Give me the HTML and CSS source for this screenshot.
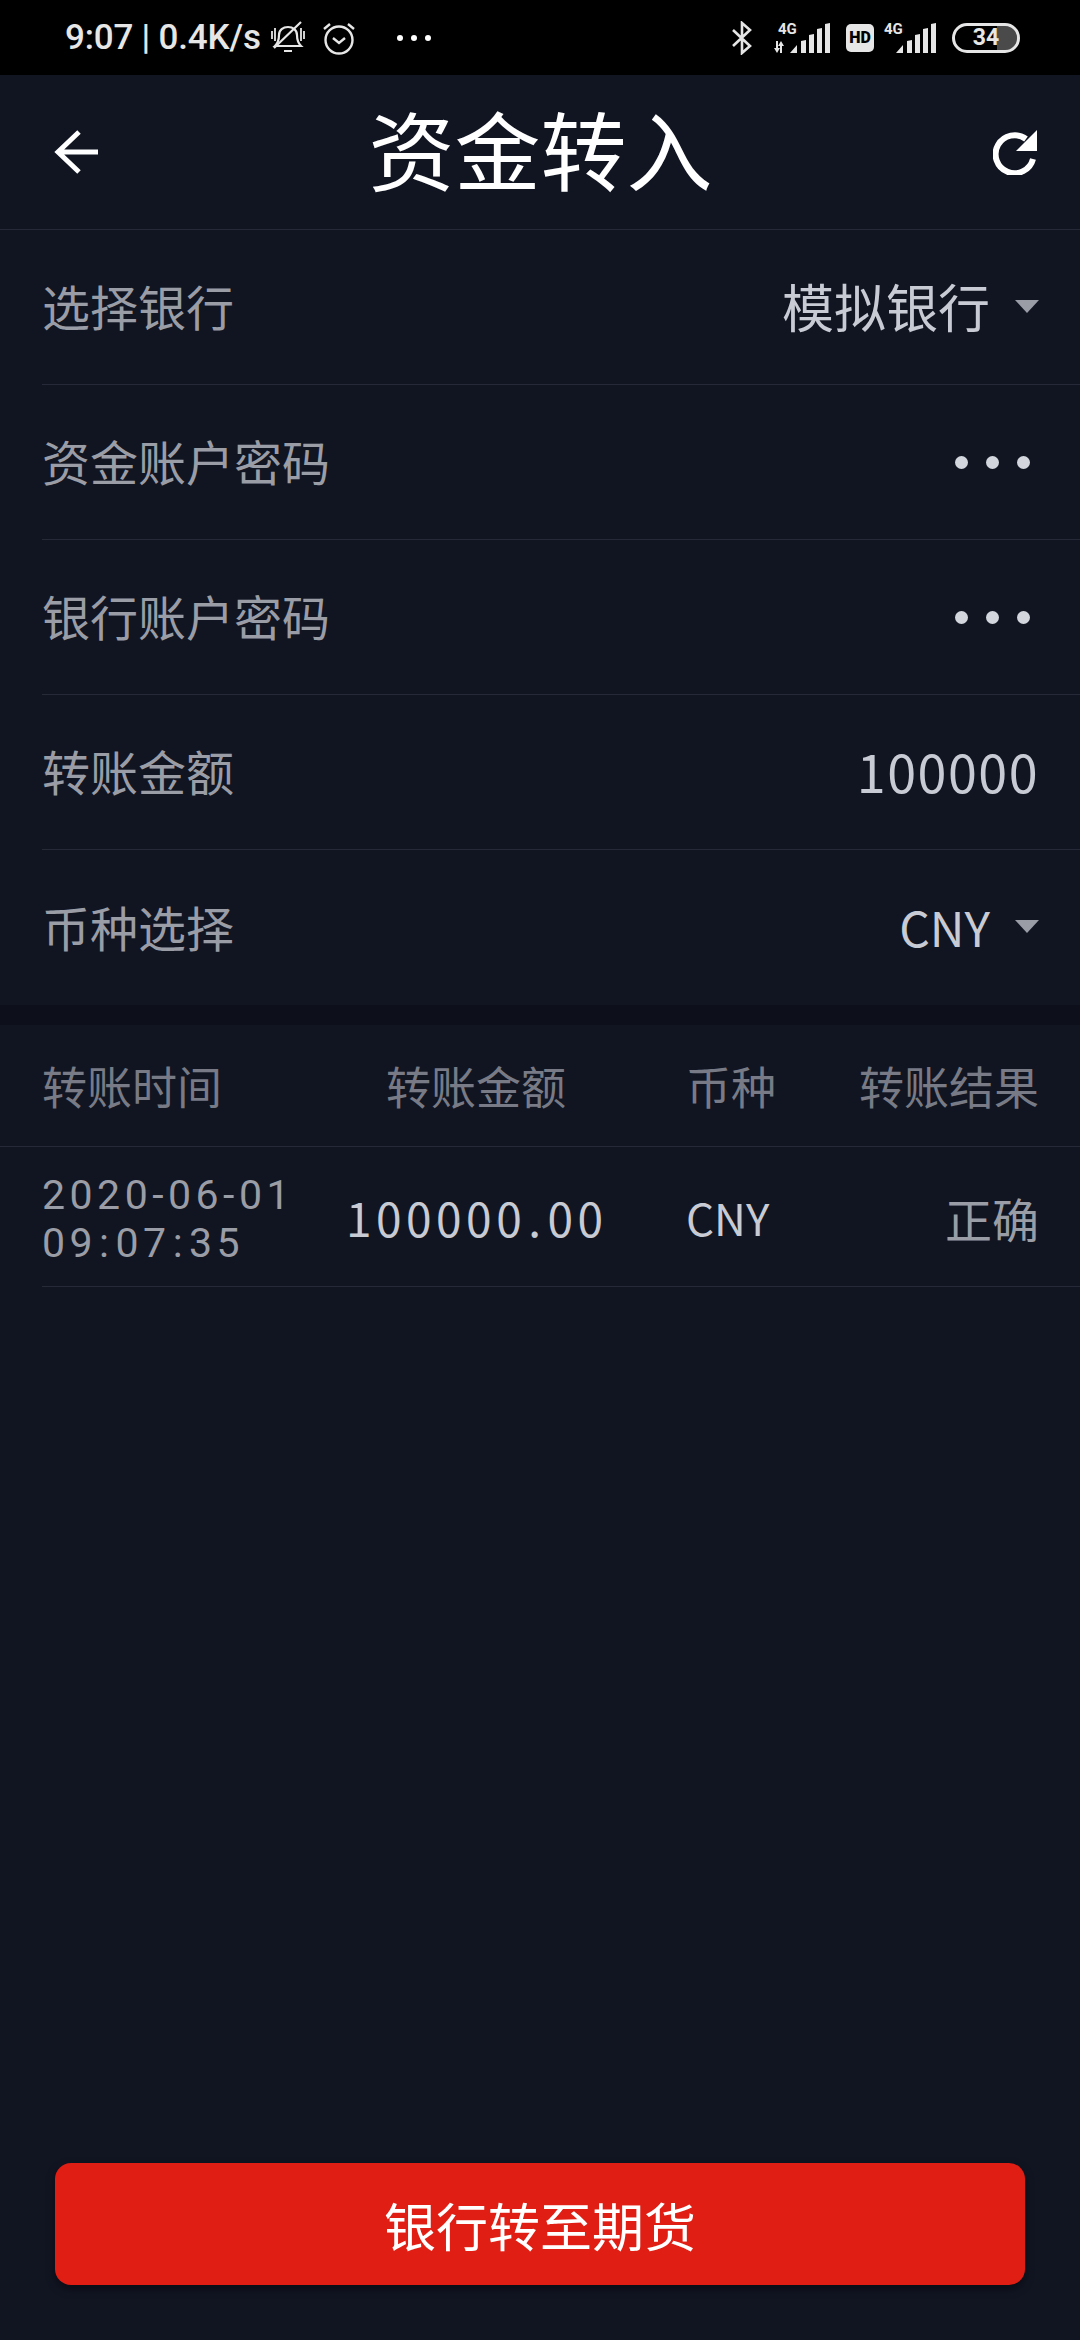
FILE: index.html
```html
<!DOCTYPE html>
<html lang="zh-CN">
<head>
    <meta charset="UTF-8">
    <title>资金转入</title>
    <link rel="stylesheet" href="styles.css">
</head>
<body>
    <div id="status-bar">
        <div class="status-left">
            <span class="status-text">9:07 | 0.4K/s</span>
            <svg class="ic-bell" width="34" height="34" viewBox="0 0 34 34" fill="none" stroke="#e6e6e6" stroke-width="2.2">
                <path d="M4 25c3-3 4-6 4-11 0-5 4-8 9-8s9 3 9 8c0 5 1 8 4 11z"/>
                <path d="M13 30h8M30 1L3 27"/>
                <path d="M1 10v8M4 7v13M30 7v13M33 10v8" stroke-width="1.8"/>
            </svg>
            <svg class="ic-alarm" width="34" height="34" viewBox="0 0 34 34" fill="none" stroke="#e6e6e6" stroke-width="2.4">
                <circle cx="17" cy="19" r="13.5"/>
                <path d="M11 17l6 5 6-5M2 8l6-5M32 8l-6-5"/>
            </svg>
            <div class="status-dots"><i></i><i></i><i></i></div>
        </div>
        <div class="status-right">
            <svg class="ic-bt" width="20" height="34" viewBox="0 0 20 34" fill="none" stroke="#e6e6e6" stroke-width="2.6">
                <path d="M1 9l17 16-8 7V2l8 7L1 25"/>
            </svg>
            <div class="signal sim1">
                <span class="net">4G</span>
                <svg class="arrows" width="12" height="12" viewBox="0 0 12 12" fill="#e6e6e6"><path d="M3 0h2v7h2l-3 5-3-5h2zM8 0l3 5H9v7H7V5H5z"/></svg>
                <svg class="bars" width="40" height="30" viewBox="0 0 40 30" fill="#e6e6e6"><path d="M0 30l7-8v8zM11 30V18l5-1v13zM19 30V12l5-1v19zM27 30V6l5-1v25zM35 30V1l5-1v30z"/></svg>
            </div>
            <div class="hd-badge">HD</div>
            <div class="signal sim2">
                <span class="net">4G</span>
                <svg class="bars" width="40" height="30" viewBox="0 0 40 30" fill="#e6e6e6"><path d="M0 30l7-8v8zM11 30V18l5-1v13zM19 30V12l5-1v19zM27 30V6l5-1v25zM35 30V1l5-1v30z"/></svg>
            </div>
            <div class="battery"><span>34</span></div>
        </div>
    </div>

    <header id="title-bar">
        <svg class="nav-icon" width="46" height="46" viewBox="0 0 46 46" fill="none" stroke="#fff" stroke-width="5">
            <path d="M44 23H4M25 3L4 23l21 20"/>
        </svg>
        <h1>资金转入</h1>
        <svg class="nav-icon" width="46" height="46" viewBox="0 0 46 46" fill="none">
            <path d="M33 10A19 19 0 1 0 40 30" stroke="#fff" stroke-width="6"/>
            <path d="M44 1V22H23z" fill="#fff"/>
        </svg>
    </header>

    <section id="form">
        <div class="form-row">
            <span class="label">选择银行</span>
            <span class="value">模拟银行<i class="caret"></i></span>
        </div>
        <div class="form-row">
            <span class="label">资金账户密码</span>
            <span class="pwd-dots"><i></i><i></i><i></i></span>
        </div>
        <div class="form-row">
            <span class="label">银行账户密码</span>
            <span class="pwd-dots"><i></i><i></i><i></i></span>
        </div>
        <div class="form-row">
            <span class="label">转账金额</span>
            <span class="value amount">100000</span>
        </div>
        <div class="form-row">
            <span class="label">币种选择</span>
            <span class="value currency">CNY<i class="caret"></i></span>
        </div>
    </section>

    <section id="records">
        <div class="table-head">
            <span class="col-time">转账时间</span>
            <span class="col-amount">转账金额</span>
            <span class="col-currency">币种</span>
            <span class="col-result">转账结果</span>
        </div>
        <div class="table-row">
            <span class="col-time time-cell">2020-06-01<br>09<span class="sep">:</span>07<span class="sep">:</span>35</span>
            <span class="col-amount amount-cell">100000<span class="sep">.</span>00</span>
            <span class="col-currency">CNY</span>
            <span class="col-result result-cell">正确</span>
        </div>
    </section>

    <div id="footer">
        <button class="submit-btn">银行转至期货</button>
    </div>
</body>
</html>
```
FILE: styles.css
```css
:root {
    --background-color: #111522;
    --label-color: #9a9da6;
    --value-color: #c8cbd3;
    --head-color: #787b85;
    --line-color: #262a38;
}

* {
    box-sizing: border-box;
}

body {
    margin: 0;
    width: 1080px;
    height: 2340px;
    display: flex;
    flex-direction: column;
    background-color: var(--background-color);
    font-family: "Noto Sans CJK SC", "Noto Sans", sans-serif;
    overflow: hidden;
}

#status-bar {
    height: 75px;
    flex: none;
    background-color: #000;
    display: flex;
    justify-content: space-between;
    align-items: center;
    padding: 0 60px 0 65px;
    color: #e6e6e6;
}

.status-left,
.status-right {
    display: flex;
    align-items: center;
}

.status-text {
    font-family: Roboto, sans-serif;
    font-size: 35px;
    font-weight: 500;
    white-space: nowrap;
    width: 198px;
    letter-spacing: -0.2px;
}

.ic-bell {
    margin-left: 8px;
}

.ic-alarm {
    margin-left: 17px;
}

.status-dots {
    display: flex;
    gap: 8px;
    margin-left: 41px;
}

.status-dots i {
    width: 6px;
    height: 6px;
    border-radius: 50%;
    background-color: #fff;
}

.ic-bt {
    margin-right: 21px;
}

.signal {
    position: relative;
    width: 57px;
    height: 30px;
    display: flex;
    justify-content: flex-end;
    align-items: flex-end;
}

.signal .net {
    position: absolute;
    left: 5px;
    top: -3px;
    font-family: Roboto, sans-serif;
    font-size: 15px;
    line-height: 18px;
    font-weight: 700;
}

.signal .arrows {
    position: absolute;
    left: 0;
    bottom: 0;
}

.sim1 {
    margin-right: 16px;
}

.sim2 {
    width: 52px;
    margin: 0 16px 0 10px;
}

.sim2 .net {
    left: 0;
}

.hd-badge {
    width: 28px;
    height: 28px;
    background-color: #e6e6e6;
    color: #000;
    border-radius: 5px;
    font-family: Roboto, sans-serif;
    font-size: 16px;
    font-weight: 900;
    line-height: 28px;
    text-align: center;
}

.battery {
    width: 68px;
    height: 30px;
    border: 3px solid #e6e6e6;
    border-radius: 15px;
    background: linear-gradient(to right, transparent 68%, #4a4a4a 68%);
    background-clip: padding-box;
    font-family: Roboto, sans-serif;
    font-size: 23px;
    font-weight: 700;
    line-height: 24px;
    text-align: center;
}

#title-bar {
    height: 155px;
    flex: none;
    display: flex;
    justify-content: space-between;
    align-items: center;
    padding: 0 41px 0 54px;
    border-bottom: 1px solid var(--line-color);
}

#title-bar h1 {
    margin: 0 12px 8px 0;
    font-size: 86px;
    font-weight: 400;
    line-height: 1;
    color: #fff;
}

#form {
    height: 775px;
    flex: none;
    padding-left: 42px;
}

.form-row {
    height: 155px;
    display: flex;
    justify-content: space-between;
    align-items: center;
    padding-right: 41px;
    border-bottom: 1px solid var(--line-color);
}

.form-row:last-child {
    border-bottom: 0;
}

.label {
    margin-bottom: 4px;
    font-size: 48px;
    color: var(--label-color);
}

.value {
    display: flex;
    align-items: center;
    margin-bottom: 4px;
    font-size: 52px;
    color: var(--value-color);
}

.amount {
    letter-spacing: 1.5px;
}

.currency {
    font-size: 48px;
}

.caret {
    width: 0;
    height: 0;
    margin-left: 25px;
    margin-top: 2px;
    border-style: solid;
    border-width: 13px 12.5px 0;
    border-color: #9a9da6 transparent transparent;
}

.pwd-dots {
    display: flex;
    gap: 18px;
    padding-right: 9px;
}

.pwd-dots i {
    width: 13px;
    height: 13px;
    border-radius: 50%;
    background-color: #d3d6dc;
}

#records {
    flex: none;
    margin-top: 20px;
    box-shadow: 0 -20px 0 #0d101a;
}

.table-head,
.table-row {
    display: flex;
    align-items: center;
    padding: 0 41px 0 42px;
}

.table-head {
    height: 122px;
    font-size: 45px;
    color: var(--head-color);
    border-bottom: 1px solid var(--line-color);
}

.table-row {
    height: 140px;
    font-size: 44px;
    color: var(--value-color);
    position: relative;
}

.table-row::after {
    content: "";
    position: absolute;
    left: 42px;
    right: 0;
    bottom: 0;
    height: 1px;
    background-color: var(--line-color);
}

.col-time {
    width: 304px;
    flex: none;
}

.col-amount {
    width: 260px;
    flex: none;
    margin-right: 80px;
    text-align: center;
    white-space: nowrap;
}

.col-currency {
    width: 120px;
    flex: none;
    white-space: nowrap;
}

.col-result {
    flex: 1;
    text-align: right;
    white-space: nowrap;
}

.time-cell {
    padding-top: 4px;
    font-family: Roboto, sans-serif;
    font-size: 41px;
    line-height: 48px;
    letter-spacing: 4.5px;
    color: var(--label-color);
    white-space: nowrap;
}

.amount-cell {
    font-size: 46px;
    letter-spacing: 4.5px;
}

.sep {
    margin: 0 2px;
}

.result-cell {
    font-size: 47px;
    color: var(--label-color);
}

#footer {
    margin-top: auto;
    padding: 0 55px 55px;
}

.submit-btn {
    display: block;
    width: 970px;
    height: 122px;
    border: 0;
    border-radius: 16px;
    background-color: #e01e14;
    box-shadow: 0 4px 10px rgba(0, 0, 0, 0.4);
    color: #fff;
    font-family: inherit;
    font-size: 52px;
}
```
